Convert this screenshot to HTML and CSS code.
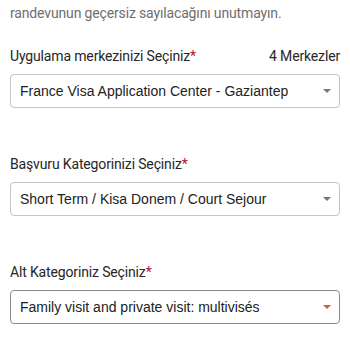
FILE: index.html
```html
<!DOCTYPE html>
<html lang="tr">
<head>
<meta charset="utf-8">
<link rel="stylesheet" href="styles.css">
</head>
<body>
<div class="page">
  <p class="note">kategorisi iade ve iptal edilmiyor, herhangi bir<br>randevunun geçersiz sayılacağını unutmayın.</p>

  <div class="field">
    <div class="label-row">
      <span class="label">Uygulama merkezinizi Seçiniz<span class="req">*</span></span>
      <span class="count">4 Merkezler</span>
    </div>
    <div class="select">
      <span class="value">France Visa Application Center - Gaziantep</span>
      <span class="arrow"></span>
    </div>
  </div>

  <div class="field">
    <div class="label-row">
      <span class="label">Başvuru Kategorinizi Seçiniz<span class="req">*</span></span>
    </div>
    <div class="select">
      <span class="value">Short Term / Kisa Donem / Court Sejour</span>
      <span class="arrow"></span>
    </div>
  </div>

  <div class="field">
    <div class="label-row">
      <span class="label">Alt Kategoriniz Seçiniz<span class="req">*</span></span>
    </div>
    <div class="select active">
      <span class="value">Family visit and private visit: multivisés</span>
      <span class="arrow"></span>
    </div>
  </div>
</div>
</body>
</html>
```

FILE: styles.css
```css
html, body {
  margin: 0;
  padding: 0;
  background: #ffffff;
  overflow: hidden;
}
.page {
  padding: 0 10px 0 10px;
  font-family: "Liberation Sans", Arial, sans-serif;
}
.note {
  margin: -24px 0 0 0;
  font-family: Roboto, "Liberation Sans", sans-serif;
  font-size: 14px;
  letter-spacing: -0.15px;
  line-height: 25px;
  color: #6e6e6e;
}
.field {
  margin-top: 20px;
}
.field + .field {
  margin-top: 46px;
}
.label-row {
  display: flex;
  justify-content: space-between;
  align-items: center;
  height: 20px;
  margin-bottom: 8px;
}
.label {
  font-family: Roboto, "Liberation Sans", sans-serif;
  font-size: 14px;
  letter-spacing: -0.15px;
  color: #262626;
}
.req {
  color: #b3132f;
}
.count {
  font-family: Roboto, "Liberation Sans", sans-serif;
  font-size: 14px;
  letter-spacing: -0.15px;
  color: #262626;
}
.select {
  display: flex;
  align-items: center;
  justify-content: space-between;
  height: 32px;
  border: 1px solid #c4c4c4;
  border-radius: 4px;
  padding: 0 8px 0 9px;
}
.select.active {
  border-color: #8a8a8a;
}
.value {
  font-size: 14px;
  color: #222222;
}
.arrow {
  width: 0;
  height: 0;
  border-left: 4px solid transparent;
  border-right: 4px solid transparent;
  border-top: 4px solid #777777;
}
.select.active .arrow {
  border-top-color: #d2601f;
}
```
